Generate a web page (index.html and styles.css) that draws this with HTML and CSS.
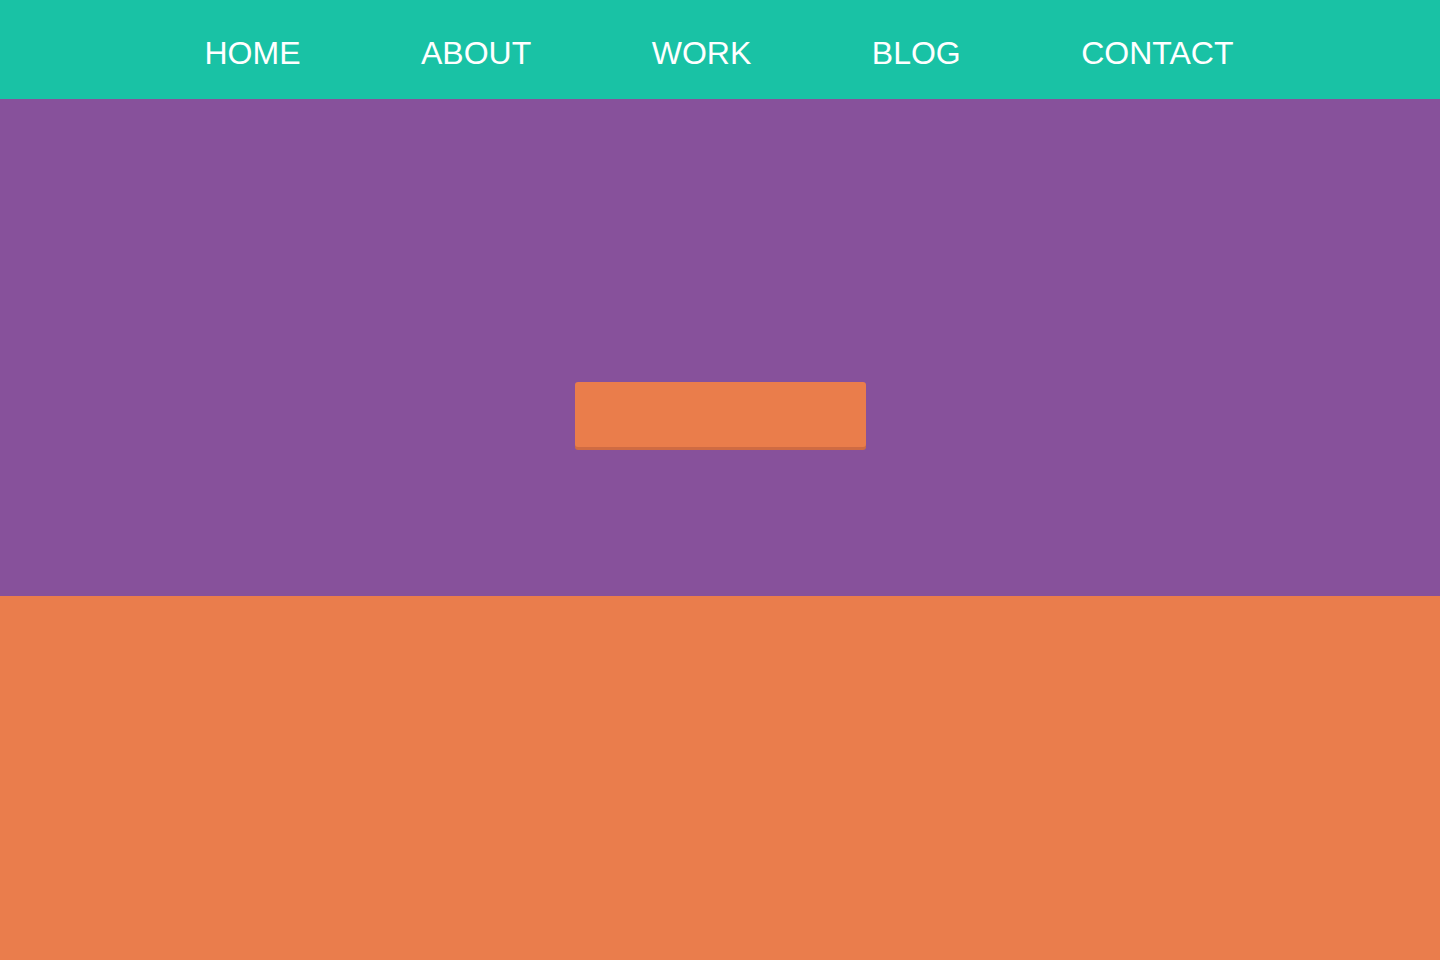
FILE: index.html
```html
<!DOCTYPE html>
<html lang="en">
<head>
<meta charset="utf-8">
<title>Page</title>
<link rel="stylesheet" href="styles.css">
</head>
<body>
<header class="nav">
  <ul class="nav-list">
    <li class="nav-item">HOME</li>
    <li class="nav-item">ABOUT</li>
    <li class="nav-item">WORK</li>
    <li class="nav-item">BLOG</li>
    <li class="nav-item">CONTACT</li>
  </ul>
</header>
<section class="hero">
  <button class="hero-btn" type="button"></button>
</section>
<section class="lower"></section>
</body>
</html>
```
FILE: styles.css
```css
html, body {
  margin: 0;
  padding: 0;
}
body {
  font-family: "Liberation Sans", Arial, sans-serif;
  background: #ea7d4c;
}
.nav {
  background: #19c2a5;
  height: 99px;
  box-sizing: border-box;
  padding-top: 35px;
}
.nav-list {
  list-style: none;
  margin: 0;
  padding: 0 2px 0 0;
  display: flex;
  justify-content: center;
  gap: 120.5px;
}
.nav-item {
  color: #ffffff;
  font-size: 32px;
  line-height: 36px;
}
.hero {
  background: #87519b;
  height: 497px;
  box-sizing: border-box;
  display: flex;
  justify-content: center;
  padding-top: 283px;
}
.hero-btn {
  width: 291px;
  height: 65px;
  margin-left: 1px;
  border: none;
  border-radius: 3px;
  background: #ea7d4b;
  box-shadow: 0 3px 0 #cf6b43;
  padding: 0;
}
.lower {
  background: #ea7d4c;
  height: 364px;
}
```
